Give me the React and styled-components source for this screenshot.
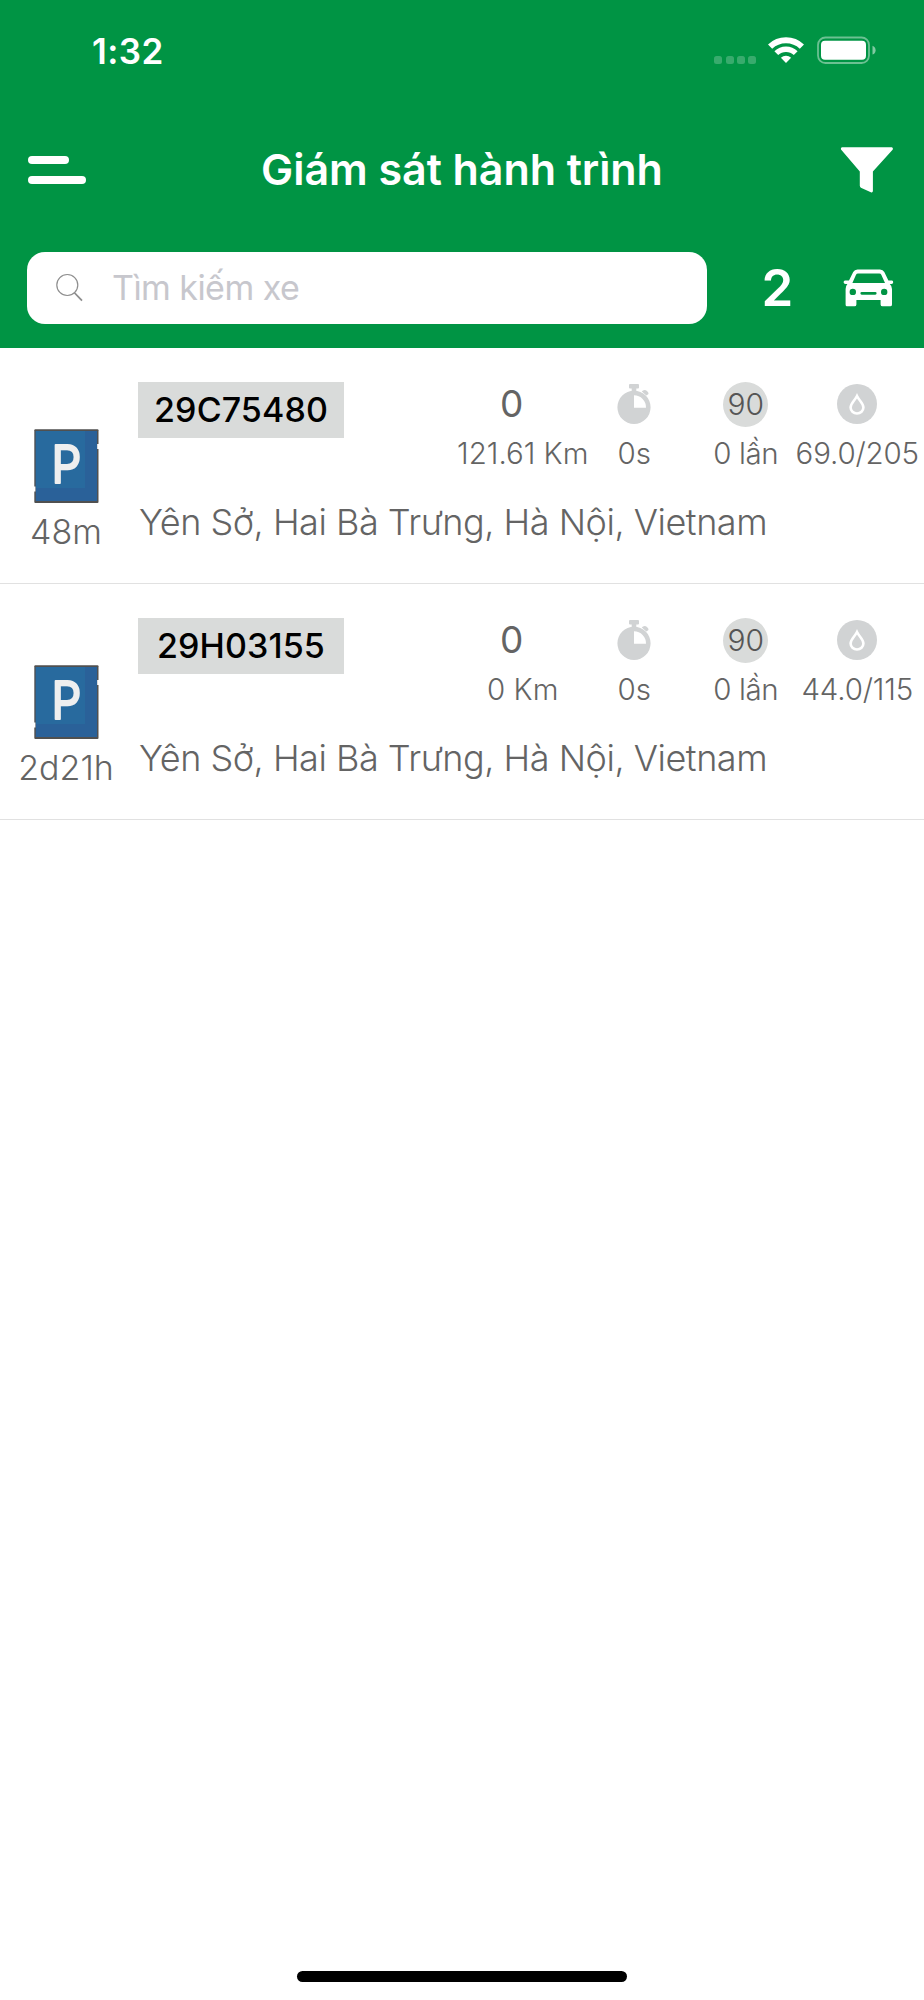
import React from "react";
import styled, { createGlobalStyle } from "styled-components";

const colors = {
  green: "#009444",
  white: "#ffffff",
  black: "#000000",
  placeholder: "#c7c7cd",
  text: "#646464",
  badge: "#d9dbda",
  icon: "#d1d3d4",
  line: "#e1e1e1",
};

const GlobalStyle = createGlobalStyle`
  body {
    margin: 0;
    background-color: ${colors.white};
    font-family: Inter, "Liberation Sans", sans-serif;
    -webkit-font-smoothing: antialiased;
  }

  svg {
    display: block;
    flex: none;
  }
`;

const Screen = styled.div`
  box-sizing: border-box;
  width: 924px;
  height: 2000px;
  display: flex;
  flex-direction: column;
  overflow: hidden;
  color: ${colors.text};
`;

const Header = styled.header`
  height: 348px;
  background-color: ${colors.green};
  color: ${colors.white};
`;

const StatusBar = styled.div`
  display: flex;
  justify-content: space-between;
  align-items: center;
  height: 100px;
  padding: 0 48px 0 92px;
`;

const Time = styled.span`
  padding-top: 1px;
  font-size: 35px;
  font-weight: 600;
  letter-spacing: 0.4px;
`;

const StatusIcons = styled.div`
  display: flex;
  align-items: center;
  gap: 12px;
`;

const Signal = styled.div`
  display: flex;
  gap: 3.2px;
  margin-top: 19px;
`;

const SignalDot = styled.i`
  width: 8px;
  height: 8px;
  border-radius: 2.5px;
  background-color: rgba(255, 255, 255, 0.22);
`;

const TitleBar = styled.div`
  display: grid;
  grid-template-columns: 56px 1fr 54px;
  align-items: center;
  height: 140px;
  padding: 0 30px 0 28px;
`;

const Menu = styled.div`
  display: flex;
  flex-direction: column;
  gap: 12.6px;
`;

const MenuBar = styled.i`
  width: ${(props) => props.$width}px;
  height: 7.6px;
  border-radius: 4px;
  background-color: ${colors.white};
`;

const Title = styled.h1`
  margin: 0;
  padding-bottom: 2px;
  font-size: 43px;
  font-weight: 600;
  line-height: 60px;
  letter-spacing: -0.07px;
  text-align: center;
  white-space: nowrap;
`;

const SearchBar = styled.div`
  display: flex;
  align-items: center;
  padding: 12px 30px 0 27px;
`;

const SearchBox = styled.div`
  box-sizing: border-box;
  display: flex;
  align-items: center;
  gap: 28px;
  width: 680px;
  height: 72px;
  padding-left: 28px;
  border-radius: 18px;
  background-color: ${colors.white};
`;

const Placeholder = styled.span`
  font-size: 34px;
  line-height: 40px;
  letter-spacing: -0.55px;
  color: ${colors.placeholder};
`;

const Count = styled.span`
  flex: 1;
  padding-left: 5px;
  font-size: 51px;
  font-weight: 600;
  line-height: 60px;
  text-align: center;
`;

const Row = styled.section`
  box-sizing: border-box;
  display: grid;
  grid-template-columns: 132px 1fr;
  column-gap: 6px;
  height: 236px;
  border-bottom: 1px solid ${colors.line};
`;

const Status = styled.div`
  display: flex;
  flex-direction: column;
  align-items: center;
  padding-top: 81px;
`;

const Duration = styled.span`
  margin-top: 8px;
  font-size: 34px;
  font-weight: 300;
  line-height: 41px;
`;

const Details = styled.div`
  padding-top: 33px;
`;

const Summary = styled.div`
  display: flex;
  align-items: flex-start;
  height: 119px;
`;

const Plate = styled.div`
  width: 206px;
  height: 56px;
  margin: 1px 123px 0 0;
  background-color: ${colors.badge};
  color: ${colors.black};
  font-size: 34px;
  font-weight: 500;
  line-height: 56px;
  letter-spacing: 0.1px;
  text-align: center;
`;

const Stats = styled.div`
  display: grid;
  grid-template-columns: repeat(4, 111.5px);
`;

const Stat = styled.div`
  display: flex;
  flex-direction: column;
  align-items: center;
`;

const StatIcon = styled.div`
  display: flex;
  align-items: center;
  justify-content: center;
  height: 46px;
`;

const Speed = styled.span`
  padding-right: 22px;
  font-size: 37px;
  line-height: 46px;
`;

const Limit = styled.span`
  width: 45px;
  height: 45px;
  border-radius: 50%;
  background-color: ${colors.badge};
  color: #555555;
  font-size: 30px;
  font-weight: 300;
  line-height: 45px;
  text-align: center;
`;

const Label = styled.span`
  margin-top: 8px;
  font-size: 29.5px;
  font-weight: 300;
  line-height: 36px;
  letter-spacing: ${(props) => props.$spacing || 0}px;
  white-space: nowrap;
`;

const Address = styled.p`
  margin: 0;
  padding-left: 1px;
  font-size: 36px;
  font-weight: 300;
  line-height: 44px;
  letter-spacing: -0.47px;
  white-space: nowrap;
`;

const Footer = styled.footer`
  display: flex;
  justify-content: center;
  margin-top: auto;
  padding-bottom: 18px;
`;

const HomeIndicator = styled.div`
  width: 330px;
  height: 11px;
  border-radius: 6px;
  background-color: ${colors.black};
`;

const WifiIcon = () => (
  <svg width="36" height="28" viewBox="0 0 36 28" fill="none" stroke="#fff">
    <path d="M2.1 10.7A23 23 0 0 1 33.9 10.7" strokeWidth="6" />
    <path d="M8.3 17.2A13.8 13.8 0 0 1 27.7 17.2" strokeWidth="5.4" />
    <path d="M18 27L12.9 21.7A7.4 7.4 0 0 1 23.1 21.7Z" fill="#fff" stroke="none" />
  </svg>
);

const BatteryIcon = () => (
  <svg width="60" height="28" viewBox="0 0 60 28">
    <rect x="2" y="1.5" width="51" height="25.5" rx="7.5" fill="none" stroke="#fff" strokeOpacity=".42" strokeWidth="1.8" />
    <rect x="5" y="4.8" width="45" height="19" rx="4" fill="#fff" />
    <path d="M56.5 9.8Q59.6 11 59.6 14.2T56.5 18.6Z" fill="#fff" fillOpacity=".5" />
  </svg>
);

const FilterIcon = () => (
  <svg width="54" height="46" viewBox="0 0 54 46">
    <path
      d="M2 .3H51.8Q53.4.8 52.8 2.6L32.9 24.6V44Q32.8 45.6 31.4 45.4L20.9 40.7Q19.8 40 19.8 38.8V24.6L1 2.6Q.4.8 2 .3Z"
      fill="#fff"
    />
  </svg>
);

const SearchIcon = () => (
  <svg width="29" height="30" viewBox="0 0 29 30" fill="none" stroke="#8e8e8e">
    <circle cx="12.3" cy="12" r="10.5" strokeWidth="1.2" />
    <path d="M19.2 19.5L27 27.7" strokeWidth="1.8" />
  </svg>
);

const CarIcon = () => (
  <svg width="51" height="38" viewBox="0 0 51 38">
    <path
      fill="#fff"
      fillRule="evenodd"
      d="M14.5.5H37Q40 .5 41.3 3L45.4 11.5H49Q50.2 11.6 50.2 13.2T48.5 15H46.8Q49 17 49 20V35.4Q49 37.3 47.2 37.3H39.5Q37.6 37.3 37.6 35.4V31H13.4V35.4Q13.4 37.3 11.5 37.3H4Q2.6 37.3 2.6 35.4V20Q2.6 17 4.4 15H2.5Q.6 15 .6 13.2T2.2 11.5H6L10.2 3Q11.5.5 14.5.5ZM15 4.4Q13.6 4.4 13 5.8L9.4 14H42L38.3 5.8Q37.8 4.4 36.3 4.4ZM9.8 19.7A3.2 3.2 0 1 0 9.8 26.1A3.2 3.2 0 1 0 9.8 19.7ZM41.2 19.7A3.2 3.2 0 1 0 41.2 26.1A3.2 3.2 0 1 0 41.2 19.7ZM18.7 22.9Q17.4 22.9 17.4 24.3T18.7 25.7H32.3Q33.6 25.7 33.6 24.3T32.3 22.9Z"
    />
  </svg>
);

const ParkingIcon = () => (
  <svg width="65" height="74" viewBox="0 0 65 74">
    <rect x=".3" y=".3" width="64.2" height="73.7" rx="1" fill="#505050" />
    <rect x="1.8" y="2" width="61.2" height="70" fill="#2a6199" />
    <rect x="1.8" y="2" width="49.2" height="57" fill="#286a9e" />
    <path d="M63.2 15H65V20H63.2ZM0 57.5H1.4V62.5H0Z" fill="#fff" />
    <text
      transform="translate(32.4 54.4) scale(.9 1)"
      textAnchor="middle"
      fontFamily="Inter"
      fontSize="52"
      fontWeight="400"
      fill="#efefef"
      stroke="#efefef"
      strokeWidth="2"
      strokeLinejoin="round"
    >
      P
    </text>
  </svg>
);

const StopwatchIcon = () => (
  <svg width="34" height="40" viewBox="0 0 34 40" fill={colors.icon}>
    <path d="M13 0H21Q22 0 22 1V3.5Q22 4.5 21 4.5H19.3V7H14.7V4.5H13Q12 4.5 12 3.5V1Q12 0 13 0Z" />
    <path d="M26 6.4Q28 5.2 30 7T31.5 10L29.3 11.6L24.8 7.6Z" />
    <path
      fillRule="evenodd"
      d="M17 6.7A16.6 16.6 0 1 0 17 39.9A16.6 16.6 0 1 0 17 6.7ZM17 11.3A12 12 0 0 1 29 23.7H17Z"
    />
  </svg>
);

const FuelIcon = () => (
  <svg width="40" height="40" viewBox="0 0 40 40">
    <circle cx="20" cy="20" r="20" fill={colors.icon} />
    <path
      d="M20 12C17.5 17 13.6 19.2 13.6 23.4A6.4 6.1 0 0 0 26.4 23.4C26.4 19.2 22.5 17 20 12Z"
      fill="none"
      stroke="#fff"
      strokeWidth="2.6"
    />
  </svg>
);

const vehicles = [
  { plate: "29C75480", duration: "48m", distance: "121.61 Km", fuel: "69.0/205" },
  { plate: "29H03155", duration: "2d21h", distance: "0 Km", fuel: "44.0/115" },
];

const VehicleRow = ({ plate, duration, distance, fuel }) => (
  <Row>
    <Status>
      <ParkingIcon />
      <Duration>{duration}</Duration>
    </Status>
    <Details>
      <Summary>
        <Plate>{plate}</Plate>
        <Stats>
          <Stat>
            <Speed>0</Speed>
            <Label>{distance}</Label>
          </Stat>
          <Stat>
            <StatIcon>
              <StopwatchIcon />
            </StatIcon>
            <Label>0s</Label>
          </Stat>
          <Stat>
            <StatIcon>
              <Limit>90</Limit>
            </StatIcon>
            <Label $spacing={-0.4}>0 lần</Label>
          </Stat>
          <Stat>
            <StatIcon>
              <FuelIcon />
            </StatIcon>
            <Label $spacing={-0.15}>{fuel}</Label>
          </Stat>
        </Stats>
      </Summary>
      <Address>Yên Sở, Hai Bà Trưng, Hà Nội, Vietnam</Address>
    </Details>
  </Row>
);

const App = () => (
  <Screen>
    <GlobalStyle />
    <Header>
      <StatusBar>
        <Time>1:32</Time>
        <StatusIcons>
          <Signal>
            <SignalDot />
            <SignalDot />
            <SignalDot />
            <SignalDot />
          </Signal>
          <WifiIcon />
          <BatteryIcon />
        </StatusIcons>
      </StatusBar>
      <TitleBar>
        <Menu>
          <MenuBar $width={41} />
          <MenuBar $width={58} />
        </Menu>
        <Title>Giám sát hành trình</Title>
        <FilterIcon />
      </TitleBar>
      <SearchBar>
        <SearchBox>
          <SearchIcon />
          <Placeholder>Tìm kiếm xe</Placeholder>
        </SearchBox>
        <Count>2</Count>
        <CarIcon />
      </SearchBar>
    </Header>
    {vehicles.map((vehicle) => (
      <VehicleRow key={vehicle.plate} {...vehicle} />
    ))}
    <Footer>
      <HomeIndicator />
    </Footer>
  </Screen>
);

export default App;
